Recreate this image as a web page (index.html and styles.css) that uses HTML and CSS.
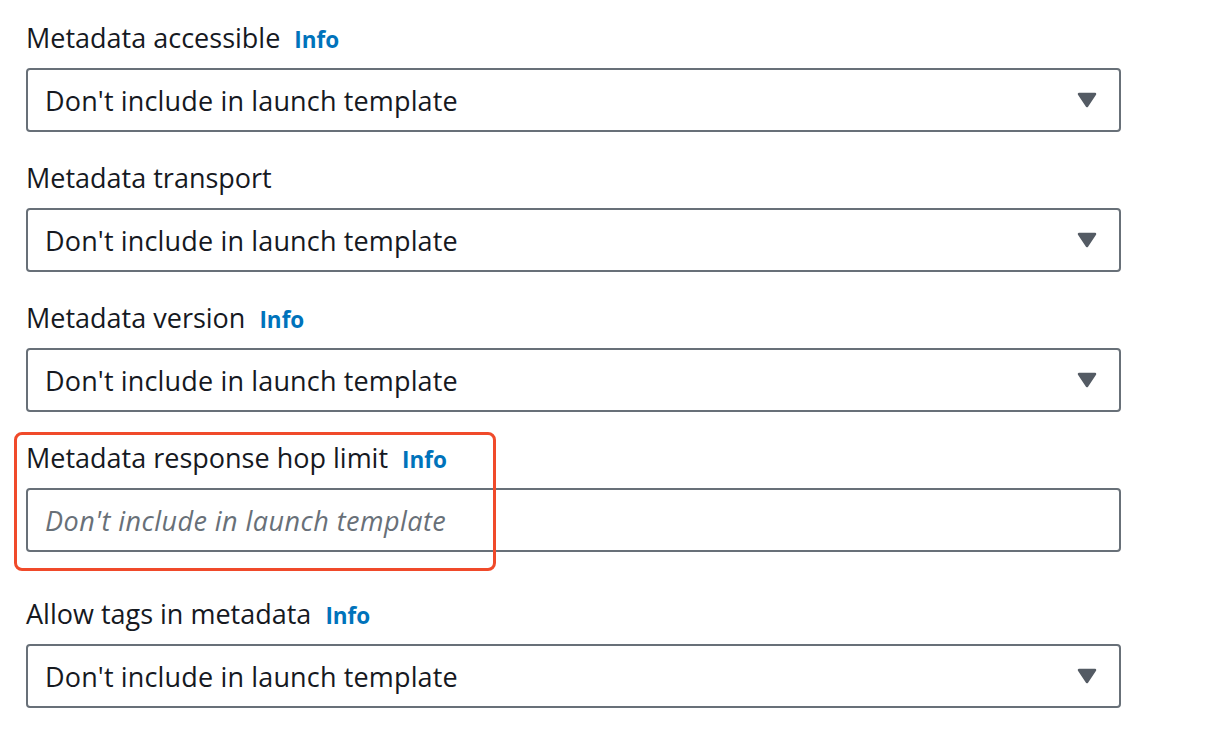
FILE: index.html
```html
<!DOCTYPE html>
<html lang="en">
<head>
<meta charset="utf-8">
<title>Metadata options</title>
<link rel="stylesheet" href="styles.css">
</head>
<body>
<main class="form">
  <div class="field">
    <div class="label-row"><span class="label">Metadata accessible</span><a class="info" href="#">Info</a></div>
    <div class="select"><span class="value">Don't include in launch template</span>
      <svg class="caret" viewBox="0 0 20 16" width="20" height="16"><path d="M2 2 H18 L10 14 Z" fill="#545b64" stroke="#545b64" stroke-width="2.5" stroke-linejoin="round"/></svg>
    </div>
  </div>
  <div class="field">
    <div class="label-row"><span class="label">Metadata transport</span></div>
    <div class="select"><span class="value">Don't include in launch template</span>
      <svg class="caret" viewBox="0 0 20 16" width="20" height="16"><path d="M2 2 H18 L10 14 Z" fill="#545b64" stroke="#545b64" stroke-width="2.5" stroke-linejoin="round"/></svg>
    </div>
  </div>
  <div class="field">
    <div class="label-row"><span class="label">Metadata version</span><a class="info" href="#">Info</a></div>
    <div class="select"><span class="value">Don't include in launch template</span>
      <svg class="caret" viewBox="0 0 20 16" width="20" height="16"><path d="M2 2 H18 L10 14 Z" fill="#545b64" stroke="#545b64" stroke-width="2.5" stroke-linejoin="round"/></svg>
    </div>
  </div>
  <div class="field highlighted">
    <div class="label-row"><span class="label">Metadata response hop limit</span><a class="info" href="#">Info</a></div>
    <div class="select input"><span class="placeholder">Don't include in launch template</span></div>
    <div class="highlight-box"></div>
  </div>
  <div class="field spaced">
    <div class="label-row"><span class="label">Allow tags in metadata</span><a class="info" href="#">Info</a></div>
    <div class="select"><span class="value">Don't include in launch template</span>
      <svg class="caret" viewBox="0 0 20 16" width="20" height="16"><path d="M2 2 H18 L10 14 Z" fill="#545b64" stroke="#545b64" stroke-width="2.5" stroke-linejoin="round"/></svg>
    </div>
  </div>
</main>
</body>
</html>
```
FILE: styles.css
```css
html, body {
  margin: 0;
  padding: 0;
  background: #ffffff;
}
body {
  font-family: "Open Sans", "Noto Sans", sans-serif;
  color: #16191f;
}
.form {
  display: flex;
  flex-direction: column;
  gap: 28px;
  padding: 20px 0 0 26px;
  width: 1095px;
}
.field {
  display: flex;
  flex-direction: column;
  gap: 12px;
  position: relative;
}
.field.spaced {
  margin-top: 16px;
}
.label-row {
  display: flex;
  align-items: baseline;
  gap: 14px;
  height: 36px;
  line-height: 36px;
}
.label {
  font-size: 27px;
  color: #16191f;
}
.info {
  font-size: 22.5px;
  font-weight: 700;
  color: #0073bb;
  text-decoration: none;
}
.select {
  box-sizing: border-box;
  height: 64px;
  border: 2px solid #687078;
  border-radius: 4px;
  display: flex;
  align-items: center;
  justify-content: space-between;
  padding: 0 22px 0 17px;
}
.value {
  font-size: 27px;
  letter-spacing: 0.15px;
  color: #16191f;
}
.placeholder {
  font-size: 27px;
  letter-spacing: 0.45px;
  font-style: italic;
  color: #687078;
}
.caret {
  display: block;
}
.highlight-box {
  position: absolute;
  left: -12px;
  top: -8px;
  width: 482px;
  height: 139px;
  box-sizing: border-box;
  border: 3px solid #f04a2a;
  border-radius: 8px;
  pointer-events: none;
}
```
